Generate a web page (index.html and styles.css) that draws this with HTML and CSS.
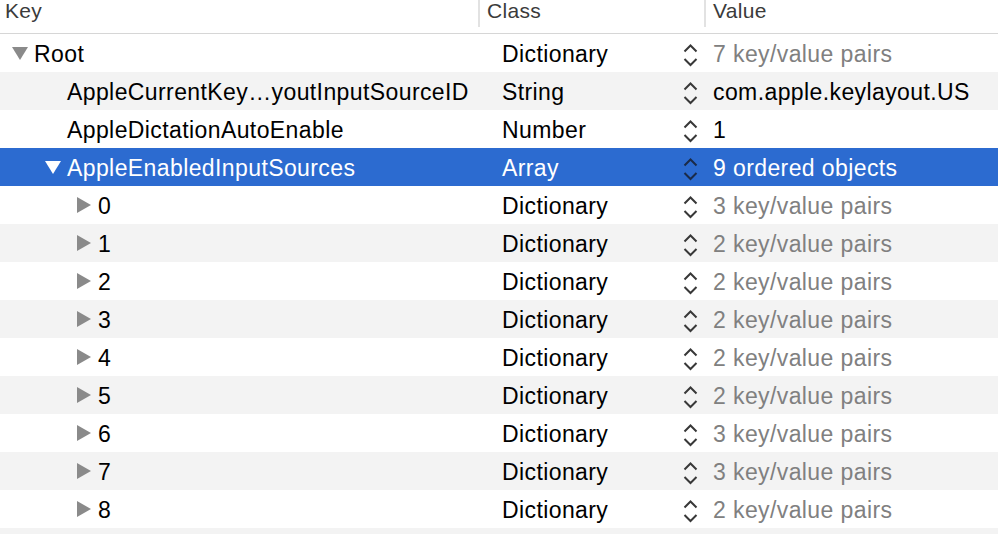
FILE: index.html
```html
<!DOCTYPE html>
<html>
<head>
<meta charset="utf-8">
<link rel="stylesheet" href="styles.css">
</head>
<body>
<div class="table">
  <div class="header">
    <div class="hcell hkey">Key</div>
    <div class="hcell hclass">Class</div>
    <div class="hcell hvalue">Value</div>
  </div>
  <div class="rows">
    <div class="row">
      <div class="key lvl0"><span class="tri down"></span>Root</div>
      <div class="cls">Dictionary</div>
      <div class="step"><svg viewBox="0 0 16 24" width="16" height="24"><path d="M1.5 8.5 L7.5 2.5 L13.5 8.5 M1.5 16 L7.5 22 L13.5 16"/></svg></div>
      <div class="val dim">7 key/value pairs</div>
    </div>
    <div class="row alt">
      <div class="key lvl1">AppleCurrentKey…youtInputSourceID</div>
      <div class="cls">String</div>
      <div class="step"><svg viewBox="0 0 16 24" width="16" height="24"><path d="M1.5 8.5 L7.5 2.5 L13.5 8.5 M1.5 16 L7.5 22 L13.5 16"/></svg></div>
      <div class="val">com.apple.keylayout.US</div>
    </div>
    <div class="row">
      <div class="key lvl1">AppleDictationAutoEnable</div>
      <div class="cls">Number</div>
      <div class="step"><svg viewBox="0 0 16 24" width="16" height="24"><path d="M1.5 8.5 L7.5 2.5 L13.5 8.5 M1.5 16 L7.5 22 L13.5 16"/></svg></div>
      <div class="val">1</div>
    </div>
    <div class="row sel">
      <div class="key lvl1s"><span class="tri down"></span>AppleEnabledInputSources</div>
      <div class="cls">Array</div>
      <div class="step"><svg viewBox="0 0 16 24" width="16" height="24"><path d="M1.5 8.5 L7.5 2.5 L13.5 8.5 M1.5 16 L7.5 22 L13.5 16"/></svg></div>
      <div class="val">9 ordered objects</div>
    </div>
    <div class="row">
      <div class="key lvl2"><span class="tri right"></span>0</div>
      <div class="cls">Dictionary</div>
      <div class="step"><svg viewBox="0 0 16 24" width="16" height="24"><path d="M1.5 8.5 L7.5 2.5 L13.5 8.5 M1.5 16 L7.5 22 L13.5 16"/></svg></div>
      <div class="val dim">3 key/value pairs</div>
    </div>
    <div class="row alt">
      <div class="key lvl2"><span class="tri right"></span>1</div>
      <div class="cls">Dictionary</div>
      <div class="step"><svg viewBox="0 0 16 24" width="16" height="24"><path d="M1.5 8.5 L7.5 2.5 L13.5 8.5 M1.5 16 L7.5 22 L13.5 16"/></svg></div>
      <div class="val dim">2 key/value pairs</div>
    </div>
    <div class="row">
      <div class="key lvl2"><span class="tri right"></span>2</div>
      <div class="cls">Dictionary</div>
      <div class="step"><svg viewBox="0 0 16 24" width="16" height="24"><path d="M1.5 8.5 L7.5 2.5 L13.5 8.5 M1.5 16 L7.5 22 L13.5 16"/></svg></div>
      <div class="val dim">2 key/value pairs</div>
    </div>
    <div class="row alt">
      <div class="key lvl2"><span class="tri right"></span>3</div>
      <div class="cls">Dictionary</div>
      <div class="step"><svg viewBox="0 0 16 24" width="16" height="24"><path d="M1.5 8.5 L7.5 2.5 L13.5 8.5 M1.5 16 L7.5 22 L13.5 16"/></svg></div>
      <div class="val dim">2 key/value pairs</div>
    </div>
    <div class="row">
      <div class="key lvl2"><span class="tri right"></span>4</div>
      <div class="cls">Dictionary</div>
      <div class="step"><svg viewBox="0 0 16 24" width="16" height="24"><path d="M1.5 8.5 L7.5 2.5 L13.5 8.5 M1.5 16 L7.5 22 L13.5 16"/></svg></div>
      <div class="val dim">2 key/value pairs</div>
    </div>
    <div class="row alt">
      <div class="key lvl2"><span class="tri right"></span>5</div>
      <div class="cls">Dictionary</div>
      <div class="step"><svg viewBox="0 0 16 24" width="16" height="24"><path d="M1.5 8.5 L7.5 2.5 L13.5 8.5 M1.5 16 L7.5 22 L13.5 16"/></svg></div>
      <div class="val dim">2 key/value pairs</div>
    </div>
    <div class="row">
      <div class="key lvl2"><span class="tri right"></span>6</div>
      <div class="cls">Dictionary</div>
      <div class="step"><svg viewBox="0 0 16 24" width="16" height="24"><path d="M1.5 8.5 L7.5 2.5 L13.5 8.5 M1.5 16 L7.5 22 L13.5 16"/></svg></div>
      <div class="val dim">3 key/value pairs</div>
    </div>
    <div class="row alt">
      <div class="key lvl2"><span class="tri right"></span>7</div>
      <div class="cls">Dictionary</div>
      <div class="step"><svg viewBox="0 0 16 24" width="16" height="24"><path d="M1.5 8.5 L7.5 2.5 L13.5 8.5 M1.5 16 L7.5 22 L13.5 16"/></svg></div>
      <div class="val dim">3 key/value pairs</div>
    </div>
    <div class="row">
      <div class="key lvl2"><span class="tri right"></span>8</div>
      <div class="cls">Dictionary</div>
      <div class="step"><svg viewBox="0 0 16 24" width="16" height="24"><path d="M1.5 8.5 L7.5 2.5 L13.5 8.5 M1.5 16 L7.5 22 L13.5 16"/></svg></div>
      <div class="val dim">2 key/value pairs</div>
    </div>
    <div class="row alt tail"></div>
  </div>
</div>
</body>
</html>
```
FILE: styles.css
```css
html, body {
  margin: 0;
  padding: 0;
  background: #ffffff;
  overflow: hidden;
}
body {
  font-family: "Liberation Sans", Arial, sans-serif;
  color: #000;
  width: 998px;
  height: 534px;
}
.table {
  height: 534px;
  overflow: hidden;
}
.header {
  display: grid;
  grid-template-columns: 478px 226px 1fr;
  height: 33px;
  border-bottom: 1px solid #d6d6d6;
  background: #fff;
}
.hcell {
  font-size: 21px;
  letter-spacing: 0.3px;
  color: #3b3b3b;
  line-height: 22px;
  align-self: start;
  height: 27px;
}
.hkey { padding-left: 5px; }
.hclass { border-left: 2px solid #e2e2e2; padding-left: 7px; }
.hvalue { border-left: 2px solid #e2e2e2; padding-left: 7px; }

.row {
  display: grid;
  grid-template-columns: 502px 181px 30px 1fr;
  height: 38px;
  align-items: center;
  font-size: 23px;
  letter-spacing: 0.4px;
}
.row.tail { height: 6px; }
.row.alt { background: #f3f3f3; }
.row.sel { background: #2c6bd0; color: #fff; }
.key, .cls, .val {
  white-space: nowrap;
  padding-top: 3px;
}
.key { display: flex; align-items: center; }
.lvl0 { padding-left: 12px; }
.lvl1 { padding-left: 67px; }
.lvl1s { padding-left: 45px; }
.lvl2 { padding-left: 77px; }
.tri {
  display: inline-block;
  width: 0;
  height: 0;
  margin-right: 6px;
}
.tri.down {
  border-left: 8px solid transparent;
  border-right: 8px solid transparent;
  border-top: 13px solid #8a8a8a;
  margin-top: -2px;
}
.sel .tri.down { border-top-color: #ffffff; }
.tri.right {
  border-top: 8px solid transparent;
  border-bottom: 8px solid transparent;
  border-left: 14px solid #8a8a8a;
  margin-right: 7px;
  margin-top: -3px;
}
.step { display: flex; align-items: center; padding-top: 4px; }
.step svg path {
  fill: none;
  stroke: #383838;
  stroke-width: 2;
}
.sel .step svg path { stroke: #1b2b48; }
.val.dim { color: #808080; }
.sel .val { color: #fff; }
```
